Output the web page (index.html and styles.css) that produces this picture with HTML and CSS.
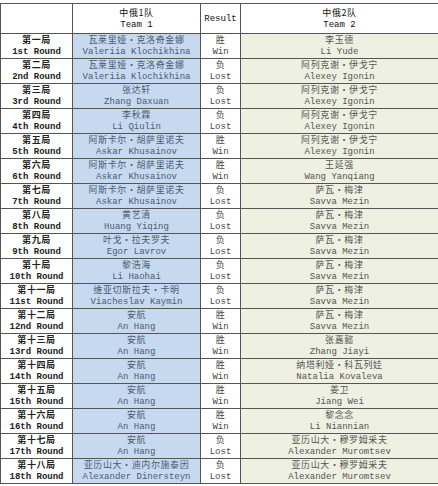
FILE: index.html
```html
<!DOCTYPE html>
<html>
<head>
<meta charset="utf-8">
<link rel="stylesheet" href="styles.css">
</head>
<body>
<table class="match">
<colgroup><col class="c-round"><col class="c-t1"><col class="c-res"><col class="c-t2"></colgroup>
<thead>
<tr><th><span class="zh">&nbsp;</span></th><th><span class="zh">中俄1队</span><span class="en">Team 1</span></th><th class="res-h">Result</th><th><span class="zh">中俄2队</span><span class="en">Team 2</span></th></tr>
</thead>
<tbody>
<tr><td class="round"><span class="zh">第一局</span><span class="en">1st Round</span></td><td class="t1"><span class="zh">瓦莱里娅•克洛奇金娜</span><span class="en">Valeriia Klochikhina</span></td><td class="res"><span class="zh">胜</span><span class="en">Win</span></td><td class="t2"><span class="zh">李玉德</span><span class="en">Li Yude</span></td></tr>
<tr><td class="round"><span class="zh">第二局</span><span class="en">2nd Round</span></td><td class="t1"><span class="zh">瓦莱里娅•克洛奇金娜</span><span class="en">Valeriia Klochikhina</span></td><td class="res"><span class="zh">负</span><span class="en">Lost</span></td><td class="t2"><span class="zh">阿列克谢•伊戈宁</span><span class="en">Alexey Igonin</span></td></tr>
<tr><td class="round"><span class="zh">第三局</span><span class="en">3rd Round</span></td><td class="t1"><span class="zh">张达轩</span><span class="en">Zhang Daxuan</span></td><td class="res"><span class="zh">负</span><span class="en">Lost</span></td><td class="t2"><span class="zh">阿列克谢•伊戈宁</span><span class="en">Alexey Igonin</span></td></tr>
<tr><td class="round"><span class="zh">第四局</span><span class="en">4th Round</span></td><td class="t1"><span class="zh">李秋霖</span><span class="en">Li Qiulin</span></td><td class="res"><span class="zh">负</span><span class="en">Lost</span></td><td class="t2"><span class="zh">阿列克谢•伊戈宁</span><span class="en">Alexey Igonin</span></td></tr>
<tr><td class="round"><span class="zh">第五局</span><span class="en">5th Round</span></td><td class="t1"><span class="zh">阿斯卡尔•胡萨里诺夫</span><span class="en">Askar Khusainov</span></td><td class="res"><span class="zh">胜</span><span class="en">Win</span></td><td class="t2"><span class="zh">阿列克谢•伊戈宁</span><span class="en">Alexey Igonin</span></td></tr>
<tr><td class="round"><span class="zh">第六局</span><span class="en">6th Round</span></td><td class="t1"><span class="zh">阿斯卡尔•胡萨里诺夫</span><span class="en">Askar Khusainov</span></td><td class="res"><span class="zh">胜</span><span class="en">Win</span></td><td class="t2"><span class="zh">王延强</span><span class="en">Wang Yanqiang</span></td></tr>
<tr><td class="round"><span class="zh">第七局</span><span class="en">7th Round</span></td><td class="t1"><span class="zh">阿斯卡尔•胡萨里诺夫</span><span class="en">Askar Khusainov</span></td><td class="res"><span class="zh">负</span><span class="en">Lost</span></td><td class="t2"><span class="zh">萨瓦•梅津</span><span class="en">Savva Mezin</span></td></tr>
<tr><td class="round"><span class="zh">第八局</span><span class="en">8th Round</span></td><td class="t1"><span class="zh">黄艺清</span><span class="en">Huang Yiqing</span></td><td class="res"><span class="zh">负</span><span class="en">Lost</span></td><td class="t2"><span class="zh">萨瓦•梅津</span><span class="en">Savva Mezin</span></td></tr>
<tr><td class="round"><span class="zh">第九局</span><span class="en">9th Round</span></td><td class="t1"><span class="zh">叶戈•拉夫罗夫</span><span class="en">Egor Lavrov</span></td><td class="res"><span class="zh">负</span><span class="en">Lost</span></td><td class="t2"><span class="zh">萨瓦•梅津</span><span class="en">Savva Mezin</span></td></tr>
<tr><td class="round"><span class="zh">第十局</span><span class="en">10th Round</span></td><td class="t1"><span class="zh">黎浩海</span><span class="en">Li Haohai</span></td><td class="res"><span class="zh">负</span><span class="en">Lost</span></td><td class="t2"><span class="zh">萨瓦•梅津</span><span class="en">Savva Mezin</span></td></tr>
<tr><td class="round"><span class="zh">第十一局</span><span class="en">11st Round</span></td><td class="t1"><span class="zh">维亚切斯拉夫•卡明</span><span class="en">Viacheslav Kaymin</span></td><td class="res"><span class="zh">负</span><span class="en">Lost</span></td><td class="t2"><span class="zh">萨瓦•梅津</span><span class="en">Savva Mezin</span></td></tr>
<tr><td class="round"><span class="zh">第十二局</span><span class="en">12nd Round</span></td><td class="t1"><span class="zh">安航</span><span class="en">An Hang</span></td><td class="res"><span class="zh">胜</span><span class="en">Win</span></td><td class="t2"><span class="zh">萨瓦•梅津</span><span class="en">Savva Mezin</span></td></tr>
<tr><td class="round"><span class="zh">第十三局</span><span class="en">13rd Round</span></td><td class="t1"><span class="zh">安航</span><span class="en">An Hang</span></td><td class="res"><span class="zh">胜</span><span class="en">Win</span></td><td class="t2"><span class="zh">张嘉懿</span><span class="en">Zhang Jiayi</span></td></tr>
<tr><td class="round"><span class="zh">第十四局</span><span class="en">14th Round</span></td><td class="t1"><span class="zh">安航</span><span class="en">An Hang</span></td><td class="res"><span class="zh">胜</span><span class="en">Win</span></td><td class="t2"><span class="zh">纳塔利娅•科瓦列娃</span><span class="en">Natalia Kovaleva</span></td></tr>
<tr><td class="round"><span class="zh">第十五局</span><span class="en">15th Round</span></td><td class="t1"><span class="zh">安航</span><span class="en">An Hang</span></td><td class="res"><span class="zh">胜</span><span class="en">Win</span></td><td class="t2"><span class="zh">姜卫</span><span class="en">Jiang Wei</span></td></tr>
<tr><td class="round"><span class="zh">第十六局</span><span class="en">16th Round</span></td><td class="t1"><span class="zh">安航</span><span class="en">An Hang</span></td><td class="res"><span class="zh">胜</span><span class="en">Win</span></td><td class="t2"><span class="zh">黎念念</span><span class="en">Li Niannian</span></td></tr>
<tr><td class="round"><span class="zh">第十七局</span><span class="en">17th Round</span></td><td class="t1"><span class="zh">安航</span><span class="en">An Hang</span></td><td class="res"><span class="zh">负</span><span class="en">Lost</span></td><td class="t2"><span class="zh">亚历山大•穆罗姆采夫</span><span class="en">Alexander Muromtsev</span></td></tr>
<tr><td class="round"><span class="zh">第十八局</span><span class="en">18th Round</span></td><td class="t1"><span class="zh">亚历山大•迪内尔施泰因</span><span class="en">Alexander Dinersteyn</span></td><td class="res"><span class="zh">负</span><span class="en">Lost</span></td><td class="t2"><span class="zh">亚历山大•穆罗姆采夫</span><span class="en">Alexander Muromtsev</span></td></tr>
</tbody>
</table>
</body>
</html>
```
FILE: styles.css
```css
html, body {
  margin: 0;
  padding: 0;
  background: #fff;
}
body {
  padding-top: 3px;
  font-family: "Liberation Mono", "Noto Sans CJK SC", monospace;
}
.match {
  border-collapse: collapse;
  table-layout: fixed;
  width: 438px;
}
.c-round { width: 72px; }
.c-t1 { width: 128px; }
.c-res { width: 40px; }
.c-t2 { width: 198px; }
.match th, .match td {
  border: 1px solid #555;
  padding: 0;
  text-align: center;
  vertical-align: middle;
  overflow: hidden;
  white-space: nowrap;
}
.match th {
  height: 29px;
  font-weight: normal;
  color: #111;
}
.match td {
  height: 24px;
}
.zh, .en {
  display: block;
  line-height: 12px;
}
.zh {
  font-family: "Noto Sans CJK SC", sans-serif;
  font-size: 9px;
  letter-spacing: 0.6px;
}
.en {
  font-size: 9px;
}
th .zh, th .en { line-height: 13px; }
.res-h { font-size: 9px; }
.round {
  color: #222;
  font-weight: bold;
}
.round .zh { font-weight: bold; }
.t1 {
  background: #c6d9ef;
  color: #4a5a74;
}
.t2 {
  background: #eef0e1;
  color: #555;
}
.res {
  color: #444;
}
```
